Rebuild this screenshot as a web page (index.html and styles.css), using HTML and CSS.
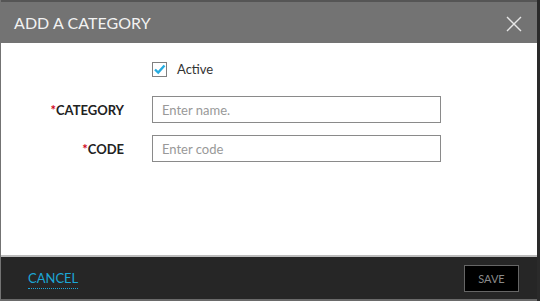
FILE: index.html
```html
<!DOCTYPE html>
<html>
<head>
<meta charset="utf-8">
<link rel="stylesheet" href="styles.css">
</head>
<body>
<div class="dialog">
  <div class="header">
    <h1 class="title">ADD A CATEGORY</h1>
    <svg class="close" width="16" height="16" viewBox="0 0 16 16"><path d="M1 1L15 15M15 1L1 15" stroke="#e6e6e6" stroke-width="1.4" fill="none"/></svg>
  </div>
  <div class="body">
    <div class="row check-row">
      <span class="label"></span>
      <span class="checkbox"><svg width="13" height="13" viewBox="0 0 13 13"><path d="M2 6.5L5.2 9.6L11.5 2.5" stroke="#26ace0" stroke-width="2.4" fill="none"/></svg></span>
      <span class="check-text">Active</span>
    </div>
    <div class="row">
      <span class="label"><span class="req">*</span>CATEGORY</span>
      <input class="field" type="text" placeholder="Enter name.">
    </div>
    <div class="row">
      <span class="label"><span class="req">*</span>CODE</span>
      <input class="field" type="text" placeholder="Enter code">
    </div>
  </div>
  <div class="footer">
    <a class="cancel">CANCEL</a>
    <button class="save">SAVE</button>
  </div>
</div>
</body>
</html>
```
FILE: styles.css
```css
html, body {
  margin: 0;
  padding: 0;
}
body {
  width: 540px;
  height: 301px;
  background: #2a2a2a;
  font-family: Lato, "Open Sans", "Liberation Sans", sans-serif;
  overflow: hidden;
}
.dialog {
  width: 536px;
  height: 299px;
  border-left: 1px solid #737373;
  border-bottom: 2px solid #6a6a6a;
  display: flex;
  flex-direction: column;
  background: #fff;
}
.header {
  height: 41px;
  flex: none;
  border-top: 2px solid #555;
  background: #737373;
  display: flex;
  align-items: center;
  justify-content: space-between;
  padding: 0 15px 0 13px;
}
.title {
  margin: 0;
  font-size: 16px;
  font-weight: 400;
  color: #f2f2f2;
  letter-spacing: 0.05px;
}
.close {
  display: block;
  margin-top: 2px;
}
.body {
  flex: 1;
  padding-top: 18px;
  background: #fff;
}
.row {
  display: flex;
  align-items: center;
  margin-bottom: 12px;
}
.check-row {
  margin-bottom: 19px;
}
.label {
  width: 123px;
  text-align: right;
  font-size: 13px;
  font-weight: 700;
  color: #222;
  margin-right: 28px;
}
.req {
  color: #d0021b;
}
.checkbox {
  width: 13px;
  height: 13px;
  border: 1px solid #808080;
  display: flex;
  align-items: center;
  justify-content: center;
  background: #fff;
}
.checkbox svg {
  display: block;
}
.check-text {
  margin-left: 10px;
  font-size: 13px;
  color: #333;
}
.field {
  box-sizing: border-box;
  width: 289px;
  height: 27px;
  border: 1px solid #8a8a8a;
  padding: 0 9px;
  font-family: Lato, "Open Sans", "Liberation Sans", sans-serif;
  font-size: 13px;
  color: #333;
  outline: none;
}
.field::placeholder {
  color: #999;
}
.footer {
  height: 42px;
  flex: none;
  border-top: 2px solid #bcbcbc;
  background: #262626;
  display: flex;
  align-items: center;
  justify-content: space-between;
  padding: 0 18px 0 27px;
}
.cancel {
  color: #1ca6d6;
  font-size: 13px;
  text-decoration: none;
  border-bottom: 1px dotted #1ca6d6;
  padding-bottom: 2px;
  margin-top: 3px;
}
.save {
  width: 55px;
  height: 27px;
  background: #000;
  border: 1px solid #666;
  color: #8a8a8a;
  font-family: Lato, "Open Sans", "Liberation Sans", sans-serif;
  font-size: 11px;
  padding: 0;
}
```
